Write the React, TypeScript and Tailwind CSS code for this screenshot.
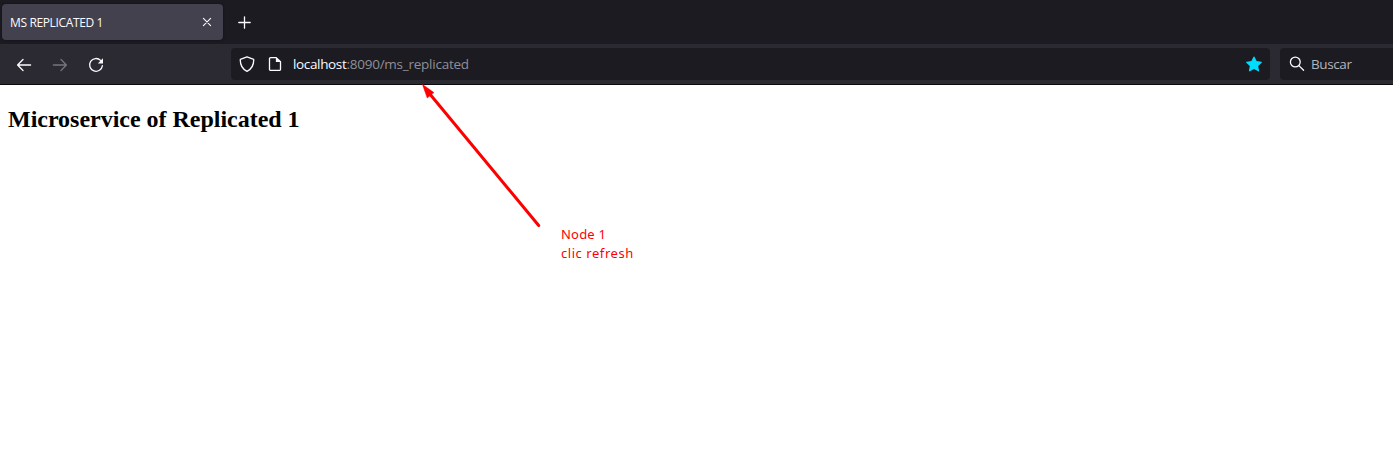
import type { ReactNode } from "react";

function Icon({ children, className = "" }: { children: ReactNode; className?: string }) {
  return (
    <svg
      viewBox="0 0 16 16"
      className={`size-4 shrink-0 ${className}`}
      fill="none"
      stroke="currentColor"
      strokeWidth="1.3"
      strokeLinecap="round"
      strokeLinejoin="round"
    >
      {children}
    </svg>
  );
}

function TabStrip() {
  return (
    <div className="flex h-11 items-center bg-[#1c1b22] pl-0.5">
      <div className="flex h-9 w-[221px] items-center justify-between rounded bg-[#42414d] px-2 shadow-[0_0_3px_rgba(0,0,0,0.5)]">
        <span className="pt-0.5 text-[12px] tracking-[-0.36px] whitespace-nowrap">MS REPLICATED 1</span>
        <Icon>
          <path d="M4.4 4.4l7.2 7.2M11.6 4.4l-7.2 7.2" strokeWidth="1.1" />
        </Icon>
      </div>
      <Icon className="ml-[13px]">
        <path d="M8.5 2.8v11.4M2.8 8.5h11.4" />
      </Icon>
    </div>
  );
}

function Toolbar() {
  return (
    <div className="flex h-[41px] items-start border-b border-[#0c0c0d] bg-[#2b2a33] pt-1">
      <div className="flex h-8 w-[231px] shrink-0 items-center gap-5 pt-px pl-4">
        <Icon>
          <path d="M14.6 8H1.8M7 2.5L1.6 8L7 13.5" />
        </Icon>
        <Icon className="text-[#76757d]">
          <path d="M1.4 8h12.8M9 2.5l5.4 5.5L9 13.5" />
        </Icon>
        <Icon>
          <path d="M12.6 3.4A6.4 6.4 0 1 0 14.4 8.6" />
          <path d="M15 1.3v5.2H9.8z" fill="currentColor" stroke="none" />
        </Icon>
      </div>
      <div className="flex h-8 w-[1039px] shrink-0 items-center rounded bg-[#1c1b22] px-2">
        <Icon>
          <path d="M8 .8L14.7 3.4C14.9 8.7 12.7 13 8 15.4C3.3 13 1.1 8.7 1.3 3.4Z" />
        </Icon>
        <Icon className="ml-3">
          <path d="M9.2 1.6H3.7A1.2 1.2 0 0 0 2.5 2.8v10.4a1.2 1.2 0 0 0 1.2 1.2h8.6a1.2 1.2 0 0 0 1.2-1.2V5.7z" />
          <path d="M8.9 1.2V6h4.9z" fill="currentColor" stroke="none" />
        </Icon>
        <span className="mt-px ml-[10px] text-[13.5px] tracking-[-0.24px] whitespace-nowrap text-[#8f8f98]">
          <span className="tracking-[-0.35px] text-[#fbfbfe]">localhost</span>:8090/ms_replicated
        </span>
        <Icon className="ml-auto text-[#00ddff]">
          <path
            d="M8 1.2L10.15 5.6L15.2 6.3L11.5 9.7L12.4 14.8L8 12.3L3.6 14.8L4.5 9.7L.8 6.3L5.85 5.6Z"
            fill="currentColor"
          />
        </Icon>
      </div>
      <div className="ml-2.5 flex h-8 flex-1 items-center overflow-hidden rounded-l bg-[#1c1b22] pl-[9px]">
        <Icon>
          <circle cx="6.3" cy="6" r="4.9" />
          <path d="M9.9 9.6l4.7 4.7" />
        </Icon>
        <span className="mt-px ml-1.5 text-[13.5px] tracking-[-0.4px] text-[#b4b4bb]">Buscar</span>
      </div>
    </div>
  );
}

export default function App() {
  return (
    <div className="relative h-[450px] w-[1393px] overflow-hidden bg-white font-['Open_Sans','Noto_Sans',sans-serif] text-[#fbfbfe]">
      <TabStrip />
      <Toolbar />
      <main className="px-2 pt-5 text-black">
        <h2 className="font-['Liberation_Serif',serif] text-[24px] leading-7 font-bold tracking-[-0.02px]">
          Microservice of Replicated 1
        </h2>
      </main>
      <svg
        className="absolute top-[84px] left-[420px] h-[146px] w-[124px] text-[#ff0000]"
        viewBox="0 0 124 146"
        fill="currentColor"
      >
        <path d="M9 9L118.7 141.5" stroke="currentColor" strokeWidth="3" strokeLinecap="round" />
        <path d="M2.3 0.2L14 8.6L7.2 14Z" stroke="currentColor" strokeWidth="0.4" />
      </svg>
      <p className="absolute top-[225px] left-[561px] font-['Noto_Sans','Open_Sans',sans-serif] text-[13px] leading-[19px] whitespace-nowrap text-[#ff0000]">
        <span className="block tracking-[0.2px]">Node 1</span>
        <span className="block tracking-[0.55px]">clic refresh</span>
      </p>
    </div>
  );
}
